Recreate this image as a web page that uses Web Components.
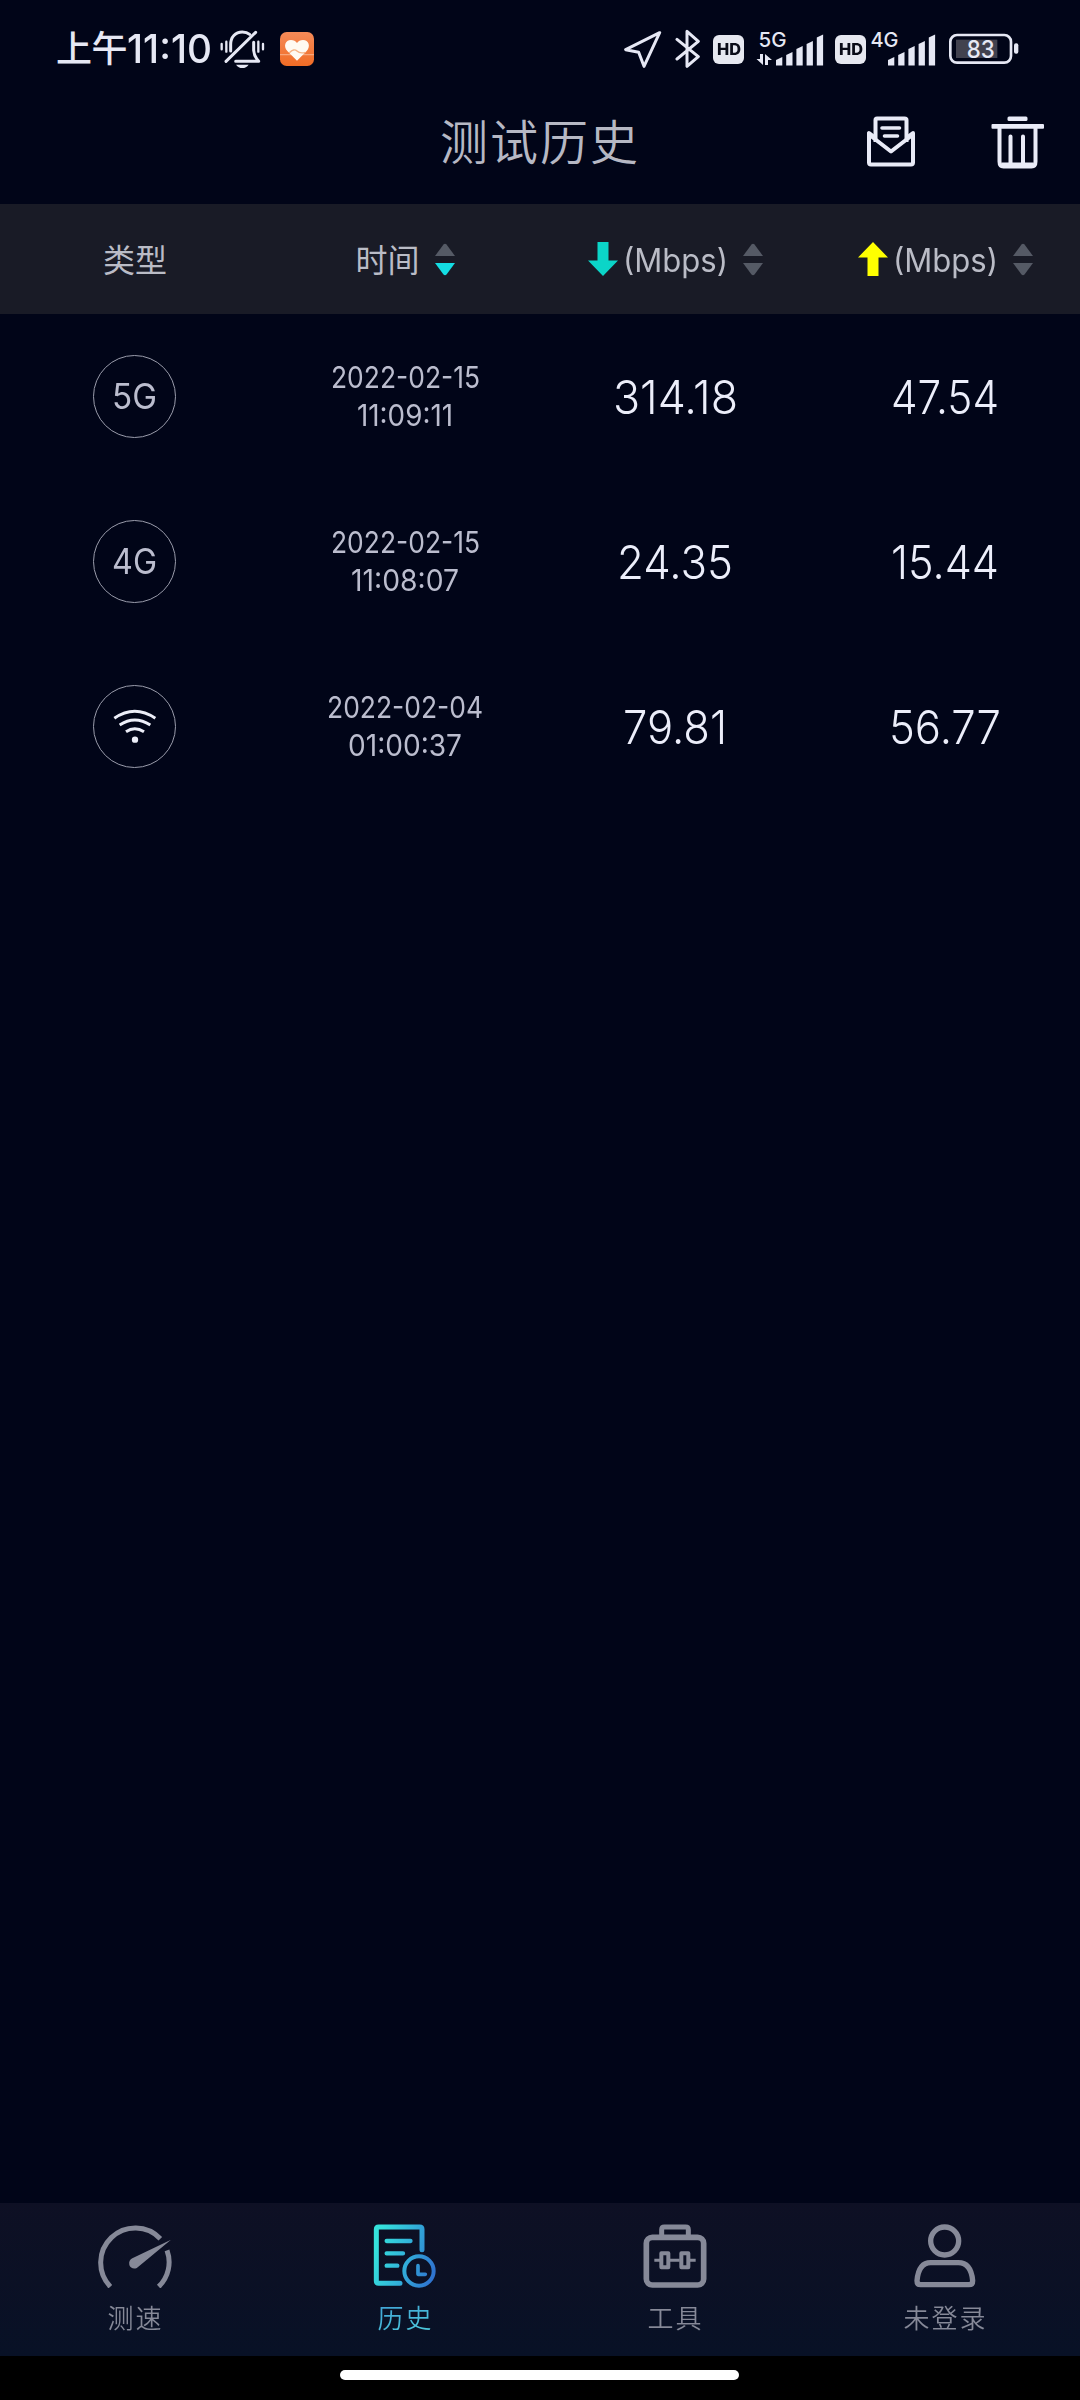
<!DOCTYPE html>
<html lang="zh-CN">
<head>
<meta charset="utf-8">
<meta name="viewport" content="width=device-width, initial-scale=1">
<title>测试历史</title>
<style>
  html, body { margin: 0; background: #010518; }
  body { font-family: Inter, "Noto Sans CJK SC", sans-serif; color: #b9bbc9; }
</style>
</head>
<body>
<history-screen>
  <status-bar slot="status"></status-bar>
  <app-bar slot="header">测试历史</app-bar>

  <history-head slot="head">
    <head-cell>类型</head-cell>
    <head-cell sort="desc">时间</head-cell>
    <head-cell sort="none" icon="down"><fit-text w="105">(Mbps)</fit-text></head-cell>
    <head-cell sort="none" icon="up"><fit-text w="105">(Mbps)</fit-text></head-cell>
  </history-head>

  <history-row>
    <net-badge slot="type"><fit-text w="45">5G</fit-text></net-badge>
    <fit-text slot="date" w="149">2022-02-15</fit-text>
    <fit-text slot="time" w="96">11:09:11</fit-text>
    <fit-text slot="down" w="125">314.18</fit-text>
    <fit-text slot="up" w="108">47.54</fit-text>
  </history-row>
  <history-row>
    <net-badge slot="type"><fit-text w="45">4G</fit-text></net-badge>
    <fit-text slot="date" w="149">2022-02-15</fit-text>
    <fit-text slot="time" w="108">11:08:07</fit-text>
    <fit-text slot="down" w="116">24.35</fit-text>
    <fit-text slot="up" w="108">15.44</fit-text>
  </history-row>
  <history-row>
    <net-badge slot="type"><ui-icon name="wifi"></ui-icon></net-badge>
    <fit-text slot="date" w="156">2022-02-04</fit-text>
    <fit-text slot="time" w="114">01:00:37</fit-text>
    <fit-text slot="down" w="104">79.81</fit-text>
    <fit-text slot="up" w="112">56.77</fit-text>
  </history-row>

  <tab-bar slot="tabs">
    <tab-item icon="gauge">测速</tab-item>
    <tab-item icon="history" active>历史</tab-item>
    <tab-item icon="tools">工具</tab-item>
    <tab-item icon="user">未登录</tab-item>
  </tab-bar>
</history-screen>

<script>
(function () {
  function define(name, html, init) {
    customElements.define(name, class extends HTMLElement {
      connectedCallback() {
        if (this.shadowRoot) return;
        var root = this.attachShadow({ mode: 'open' });
        root.innerHTML = typeof html === 'function' ? html(this) : html;
        if (init) init(this, root);
      }
    });
  }

  // [width, height, viewBox, markup]
  var ICONS = {
    bell: [46, 40, '536 58 138 120',
      '<g fill="none" stroke="#e6e8f4" stroke-width="9" stroke-linecap="round" stroke-linejoin="round">' +
      '<path d="M557 155L646 68"/><path d="M571 124V104C571 82 585 67 606 67C615 67 622 69 628 74"/>' +
      '<path d="M640 98V122C641 138 648 147 655 155H586"/>' +
      '<path d="M558 96V126M544 103V119M654 96V126M668 103V119" stroke-width="7"/></g>' +
      '<path d="M587 165H625C620 172 614 175 606 175C598 175 592 172 587 165Z" fill="#e6e8f4"/>'],
    health: [34, 34, '0 0 102 102',
      '<defs><linearGradient id="o" x2="0" y2="1"><stop stop-color="#f58b58"/><stop offset="1" stop-color="#f06c25"/></linearGradient></defs>' +
      '<rect width="102" height="102" rx="20" fill="url(#o)"/><path d="M0 68H102" stroke="#f7a77c" stroke-width="4"/>' +
      '<path d="M51 86L22 57C9 43 16 24 33 24C41 24 47 28 51 33C55 28 61 24 69 24C86 24 93 43 80 57Z" fill="#fffaf2"/>' +
      '<path d="M28 62Q42 48 51 57T76 61" fill="none" stroke="#f6b486" stroke-width="4"/>'],
    locate: [38, 38, '44 62 114 114',
      '<path d="M151 70L49 121L88 129L104 171Z" fill="none" stroke="#e6e8f4" stroke-width="9" stroke-linejoin="round"/>'],
    bluetooth: [26, 40, '196 57 78 120',
      '<path d="M202 88L266 140L232 169V64L266 94L202 147" fill="none" stroke="#e6e8f4" stroke-width="9" stroke-linecap="round" stroke-linejoin="round"/>'],
    battery: [70, 32, '386 70 210 96',
      '<rect x="407" y="90" width="124" height="55" fill="#42424f"/>' +
      '<rect x="390" y="76" width="182" height="83" rx="20" fill="none" stroke="#e6e8f4" stroke-width="8"/>' +
      '<rect x="581" y="101" width="13" height="31" rx="6" fill="#e6e8f4"/>' +
      '<text x="439" y="144" textLength="84" lengthAdjust="spacingAndGlyphs" font-size="72" font-weight="500" fill="#e6e8f4">83</text>'],
    mail: [50, 52, '866 117 50 52',
      '<g fill="none" stroke="#e9ebf7" stroke-width="4" stroke-linejoin="round" stroke-linecap="round">' +
      '<path d="M875.500 143V121Q875.500 119.500 877 119.500H904.500Q906.500 119.500 906.500 121V143" stroke-linecap="butt"/>' +
      '<path d="M873 137L869 134V163.500Q869 165.500 871 165.500H911Q913 165.500 913 163.500V134L909 137"/>' +
      '<path d="M869 135.500L891 152.500L913 135.500"/></g>' +
      '<path d="M882 129H899.500M884.500 137H897.500" stroke="#e9ebf7" stroke-width="3.600" stroke-linecap="round"/>'],
    trash: [53, 53, '991.500 115.500 53 53',
      '<g fill="#e9ebf7"><rect x="1008" y="116" width="20" height="4.500" rx="1.500"/><rect x="992" y="123.500" width="52.500" height="4.800" rx="1"/></g>' +
      '<path d="M1000 128V161Q1000 166 1004 166H1032Q1036 166 1036 161V128M1011 136V165M1023.500 136V165" fill="none" stroke="#e9ebf7" stroke-width="4" stroke-linecap="round"/>' +
      '<path d="M1002 164.500H1034" stroke="#e9ebf7" stroke-width="5"/>'],
    down: [30, 34, '0 0 30 34', '<path d="M9.500 0H20.500V18.500H30L15 34L0 18.500H9.500Z" fill="#0bd5c8"/>'],
    up: [30, 34, '0 0 30 34', '<path d="M9.500 34H20.500V15.500H30L15 0L0 15.500H9.500Z" fill="#ffff00"/>'],
    wifi: [44, 36, '158 145 132 108',
      '<g fill="none" stroke="#eceef8" stroke-width="9"><path d="M162 176Q223 134 285 176"/><path d="M178 196Q223 166 270 196"/><path d="M197 216Q223 198 251 216"/></g>' +
      '<circle cx="224" cy="240" r="9.500" fill="#eceef8"/>'],
    gauge: [74, 64, '114 103 222 192',
      '<g fill="none" stroke="#868998" stroke-width="15"><path d="M151 291A102 102 0 0 1 301 147"/><path d="M321 182A102 102 0 0 1 296 291"/></g>' +
      '<path d="M333 150L235 231C226 241 211 237 208 226C206 216 210 209 217 206Z" fill="#868998"/>'],
    history: [64, 64, '940 103 192 192',
      '<defs><linearGradient id="h" gradientUnits="userSpaceOnUse" x1="945" y1="180" x2="1128" y2="235">' +
      '<stop stop-color="#35e2dc"/><stop offset=".45" stop-color="#32b6da"/><stop offset="1" stop-color="#2f73cf"/></linearGradient></defs>' +
      '<g fill="none" stroke="url(#h)" stroke-width="15" stroke-linecap="round" stroke-linejoin="round">' +
      '<path d="M1087 180V119Q1087 112 1080 112H957Q950 112 950 119V274Q950 281 957 281H1021"/>' +
      '<path d="M981 154H1052.500M981 191H1030M981 228H1013" stroke-width="13"/>' +
      '<circle cx="1078" cy="244" r="44" stroke-width="12"/><path d="M1075 228V254H1097" stroke-width="11"/></g>'],
    tools: [64, 64, '128 103 192 192',
      '<g fill="none" stroke="#868998" stroke-linejoin="round"><rect x="138" y="143" width="172" height="143" rx="18" stroke-width="17"/>' +
      '<path d="M184 138V120Q184 112 192 112H256Q264 112 264 120V138" stroke-width="15"/>' +
      '<path d="M162 212H180M209 212H238M269 212H286" stroke-width="9"/>' +
      '<path d="M183 191H204V233H183ZM243 191H264V233H243Z" stroke-width="12"/></g>'],
    user: [64, 64, '938 103 192 192',
      '<g fill="none" stroke="#868998" stroke-width="16" stroke-linejoin="round"><circle cx="1033" cy="154" r="42"/>' +
      '<path d="M991 219H1074C1101 219 1114 240 1117 273Q1117 285 1106 285H961Q950 285 950 273C953 240 965 219 991 219Z"/></g>']
  };

  define('ui-icon', function (el) {
    var ic = ICONS[el.getAttribute('name')];
    return '<style>:host{display:block;flex:none}svg{display:block}</style>' +
      '<svg width="' + ic[0] + '" height="' + ic[1] + '" viewBox="' + ic[2] + '">' + ic[3] + '</svg>';
  });

  define('hd-tag',
    '<style>:host{display:grid;place-items:center;flex:none;width:31px;height:29px;border-radius:6px;' +
    'background:#e6e8f0;color:#0a0c18;font-size:16px;font-weight:800;line-height:29px}</style>' +
    '<fit-text w="24"><slot></slot></fit-text>');

  define('signal-meter', function (el) {
    var bars = [57, 52, 46, 41, 34.5].map(function (top, i) {
      var x = 19 + i * 10.2;
      return '<path d="M' + x + ' ' + (top + 2) + 'L' + (x + 6.3) + ' ' + (top - 1) + 'V64.500H' + x + 'Z"/>';
    }).join('');
    var data = el.hasAttribute('data')
      ? '<path d="M3 53H6V64L-.500 58H3ZM8 64V53L15 59H11V64Z"/>' : '';
    var shift = el.hasAttribute('data') ? 0 : 2;
    return '<style>:host{display:block;flex:none}svg{display:block;overflow:visible}</style>' +
      '<svg width="' + (66 - shift) + '" height="36" viewBox="' + shift + ' 30 ' + (66 - shift) + ' 36" fill="#e6e8f4">' +
      '<text x="1.500" y="46" font-size="20" font-weight="500" textLength="28" lengthAdjust="spacingAndGlyphs">' +
      el.getAttribute('net') + '</text>' + data + bars + '</svg>';
  });

  define('status-bar',
    '<style>:host{display:flex;align-items:center;height:98px;padding:0 61px 0 56px;color:#e6e8f4}' +
    '.clock{display:flex;font-size:39px;font-weight:500;line-height:60px}' +
    '.cjk{font-size:36px;letter-spacing:-.5px}' +
    '.bell{margin-left:7px}.app{margin-left:15px}.right{display:flex;align-items:center;margin-left:auto}' +
    '.right>*+*{margin-left:13px}</style>' +
    '<div class="clock"><span class="cjk">上午</span><fit-text w="85">11:10</fit-text></div>' +
    '<ui-icon class="bell" name="bell"></ui-icon><ui-icon class="app" name="health"></ui-icon>' +
    '<div class="right"><ui-icon name="locate"></ui-icon><ui-icon name="bluetooth"></ui-icon>' +
    '<hd-tag style="margin-left:12px">HD</hd-tag><signal-meter net="5G" data></signal-meter>' +
    '<hd-tag style="margin-left:12px">HD</hd-tag><signal-meter net="4G" style="margin-left:5px"></signal-meter>' +
    '<ui-icon name="battery" style="margin-left:14px"></ui-icon></div>');

  define('app-bar',
    '<style>:host{display:grid;grid-template-columns:1fr auto 1fr;align-items:center;height:88px;' +
    'padding:0 36px 18px;color:#b6b8c4}' +
    'h1{grid-column:2;margin:0;padding-top:2px;font-size:48px;font-weight:350;letter-spacing:2px;line-height:60px}' +
    '.actions{display:flex;align-items:center;justify-content:flex-end;gap:75px}</style>' +
    '<h1><slot></slot></h1><div class="actions"><ui-icon name="mail"></ui-icon><ui-icon name="trash"></ui-icon></div>');

  define('history-head',
    '<style>:host{display:grid;grid-template-columns:repeat(4,1fr);height:110px;background:#191b26;color:#babcc6}</style><slot></slot>');

  define('sort-mark', function (el) {
    var on = el.getAttribute('dir') === 'desc';
    return '<style>:host{display:block;flex:none}svg{display:block}</style>' +
      '<svg width="20" height="33" viewBox="0 0 20 33"><path d="M0 13L8.500 1.500Q10 0 11.500 1.500L20 13Z" fill="#555a65"/>' +
      '<path d="M0 20L8.500 31.500Q10 33 11.500 31.500L20 20Z" fill="' + (on ? '#14dde3' : '#555a65') + '"/></svg>';
  });

  define('head-cell', function (el) {
    var icon = el.getAttribute('icon');
    var sort = el.getAttribute('sort');
    return '<style>:host{display:flex;align-items:center;justify-content:center;font-size:32px;line-height:44px;font-weight:400}' +
      '.label{padding-top:3px}ui-icon{margin-right:5px}sort-mark{margin-left:15px}</style>' +
      (icon ? '<ui-icon name="' + icon + '"></ui-icon>' : '') + '<div class="label"><slot></slot></div>' +
      (sort ? '<sort-mark dir="' + sort + '"></sort-mark>' : '');
  });

  define('net-badge',
    '<style>:host{display:grid;place-items:center;box-sizing:border-box;width:83px;height:83px;margin:0 1px 1px 0;' +
    'border:1px solid #9a9cab;border-radius:50%;font-size:35px;line-height:44px}</style><slot></slot>');

  define('history-row',
    '<style>:host{display:grid;grid-template-columns:repeat(4,1fr);align-items:center;justify-items:center;height:165px;color:#bbbdce}' +
    '.when{display:flex;flex-direction:column;align-items:center;padding-bottom:1px;font-size:30px;line-height:38px}' +
    '.speed{font-size:47px;font-weight:350;line-height:60px;color:#eceefa}</style>' +
    '<slot name="type"></slot>' +
    '<div class="when"><slot name="date"></slot><slot name="time"></slot></div>' +
    '<div class="speed"><slot name="down"></slot></div><div class="speed"><slot name="up"></slot></div>');

  define('tab-item', function (el) {
    var color = el.hasAttribute('active') ? 'linear-gradient(160deg,#3f9fd6,#4fd0dc)' : 'linear-gradient(#868998,#868998)';
    return '<style>:host{display:flex;flex-direction:column;align-items:center;padding-top:21px}' +
      'span{margin-top:13px;padding-left:1px;font-size:26px;font-weight:350;letter-spacing:2px;line-height:36px;' +
      'color:transparent;background:' + color + ';background-clip:text;-webkit-background-clip:text}</style>' +
      '<ui-icon name="' + el.getAttribute('icon') + '"></ui-icon><span><slot></slot></span>';
  });

  define('tab-bar',
    '<style>:host{display:block;background:#000}' +
    'nav{display:grid;grid-template-columns:repeat(4,1fr);height:153px;background:linear-gradient(#0e1024,#081126)}' +
    '.home{height:44px;display:flex;justify-content:center}' +
    '.home i{width:399px;height:10px;margin:14px 1px 0 0;border-radius:5px;background:#fff}</style>' +
    '<nav><slot></slot></nav><div class="home"><i></i></div>');

  define('history-screen',
    '<style>:host{display:flex;flex-direction:column;width:1080px;height:2400px;overflow:hidden}' +
    'main{flex:1}</style>' +
    '<slot name="status"></slot><slot name="header"></slot>' +
    '<slot name="head"></slot><main><slot></slot></main><slot name="tabs"></slot>');

  // squeezes its text horizontally to a given width;
  // defined last, so the elements around it have set their font size by then
  define('fit-text',
    '<style>:host{display:block;flex:none;white-space:nowrap}' +
    'span{display:inline-block;transform-origin:0 50%}</style><span><slot></slot></span>',
    function (el, root) {
      var w = +el.getAttribute('w');
      var span = root.querySelector('span');
      el.style.width = w + 'px';
      span.style.transform = 'scaleX(' + w / span.getBoundingClientRect().width + ')';
    });
})();
</script>
</body>
</html>
